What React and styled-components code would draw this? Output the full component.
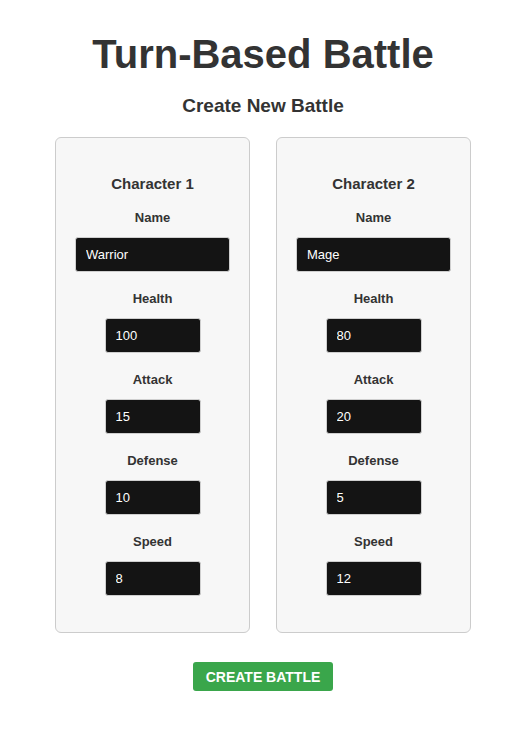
import React, { useState } from "react";
import styled, { createGlobalStyle } from "styled-components";

const GlobalStyle = createGlobalStyle`
  body {
    margin: 0;
    background: #ffffff;
    font-family: "Liberation Sans", Arial, sans-serif;
    color: #333333;
  }
`;

const Page = styled.div`
  display: flex;
  flex-direction: column;
  align-items: center;
  padding: 31px 2px 0 0;
`;

const Title = styled.h1`
  margin: 0;
  font-size: 40px;
  line-height: 46px;
  font-weight: bold;
  color: #333333;
`;

const Subtitle = styled.h2`
  margin: 18px 0 20px;
  font-size: 19px;
  line-height: 22px;
  font-weight: bold;
  color: #333333;
`;

const Cards = styled.div`
  display: flex;
  gap: 26px;
`;

const Card = styled.div`
  width: 195px;
  box-sizing: border-box;
  padding: 37px 19px 36px;
  background: #f7f7f7;
  border: 1px solid #cccccc;
  border-radius: 6px;
  display: flex;
  flex-direction: column;
  align-items: center;
`;

const CardTitle = styled.h3`
  margin: 0 0 17px;
  font-size: 15px;
  line-height: 18px;
  font-weight: bold;
  color: #333333;
`;

const Field = styled.div`
  display: flex;
  flex-direction: column;
  align-items: center;
  width: 100%;
  & + & {
    margin-top: 19px;
  }
`;

const Label = styled.label`
  font-size: 13px;
  line-height: 15px;
  font-weight: bold;
  margin-bottom: 12px;
  color: #333333;
`;

const Input = styled.input`
  box-sizing: border-box;
  width: ${(p) => (p.$wide ? "100%" : "96px")};
  height: 35px;
  padding: 0 10px;
  background: #141414;
  color: #ffffff;
  border: 1px solid #cfcfcf;
  border-radius: 3px;
  font-family: "Liberation Sans", Arial, sans-serif;
  font-size: 13px;
  outline: none;
`;

const CreateButton = styled.button`
  margin-top: 29px;
  height: 29px;
  padding: 0 13px;
  background: #3aa64b;
  color: #ffffff;
  border: none;
  border-radius: 3px;
  font-family: "Liberation Sans", Arial, sans-serif;
  font-size: 14px;
  font-weight: bold;
  text-transform: uppercase;
  cursor: pointer;
`;

const stats = ["health", "attack", "defense", "speed"];

const CharacterForm = ({ index, data, onChange }) => (
  <Card>
    <CardTitle>Character {index}</CardTitle>
    <Field>
      <Label>Name</Label>
      <Input $wide type="text" value={data.name} onChange={(e) => onChange("name", e.target.value)} />
    </Field>
    {stats.map((s) => (
      <Field key={s}>
        <Label>{s.charAt(0).toUpperCase() + s.slice(1)}</Label>
        <Input type="text" value={data[s]} onChange={(e) => onChange(s, e.target.value)} />
      </Field>
    ))}
  </Card>
);

const App = () => {
  const [chars, setChars] = useState([
    { name: "Warrior", health: 100, attack: 15, defense: 10, speed: 8 },
    { name: "Mage", health: 80, attack: 20, defense: 5, speed: 12 },
  ]);

  const update = (i) => (key, value) => {
    setChars((prev) => prev.map((c, j) => (j === i ? { ...c, [key]: value } : c)));
  };

  return (
    <>
      <GlobalStyle />
      <Page>
        <Title>Turn-Based Battle</Title>
        <Subtitle>Create New Battle</Subtitle>
        <Cards>
          {chars.map((c, i) => (
            <CharacterForm key={i} index={i + 1} data={c} onChange={update(i)} />
          ))}
        </Cards>
        <CreateButton type="button">Create Battle</CreateButton>
      </Page>
    </>
  );
};

export default App;
